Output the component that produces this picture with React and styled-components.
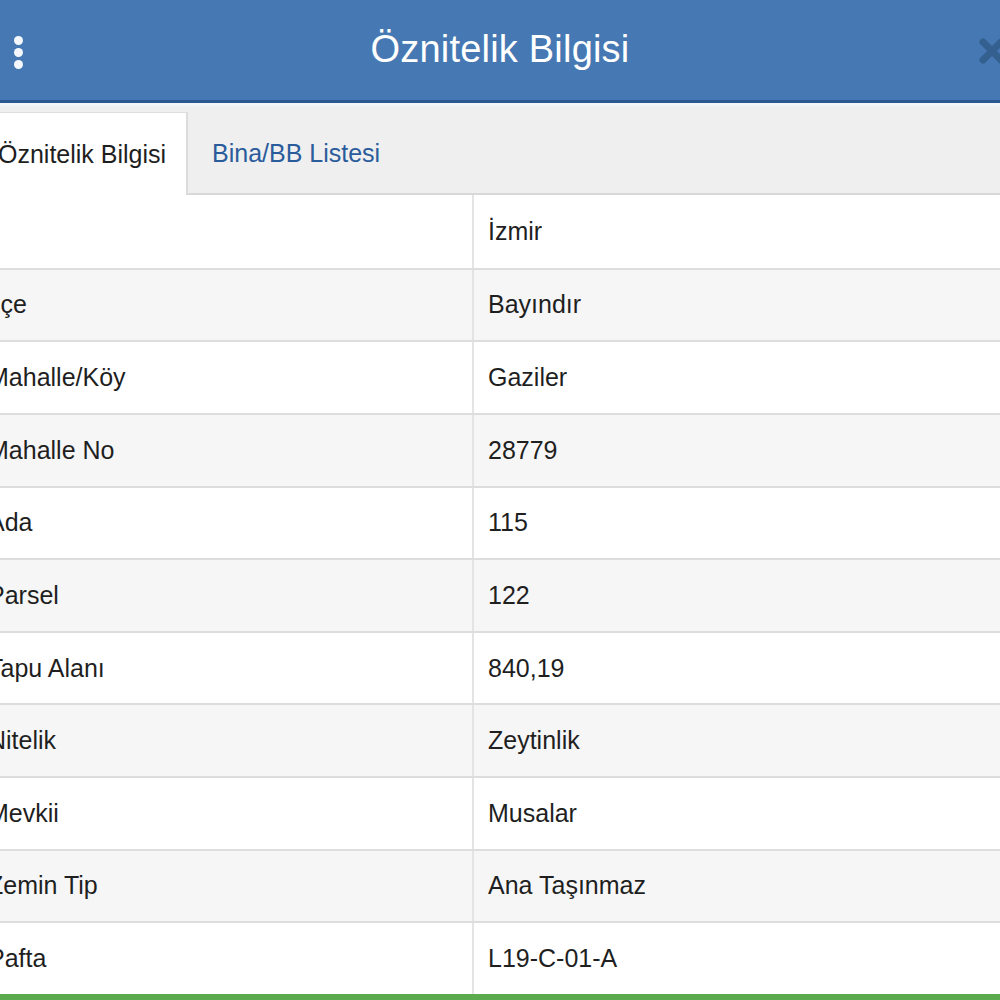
import styled, { createGlobalStyle } from "styled-components";

const GlobalStyle = createGlobalStyle`
  html, body {
    margin: 0;
    padding: 0;
    background: #ffffff;
    overflow: hidden;
  }
  body {
    font-family: "Liberation Sans", Arial, sans-serif;
  }
`;

const rows = [
  { label: "İl", value: "İzmir" },
  { label: "İlçe", value: "Bayındır" },
  { label: "Mahalle/Köy", value: "Gaziler" },
  { label: "Mahalle No", value: "28779" },
  { label: "Ada", value: "115" },
  { label: "Parsel", value: "122" },
  { label: "Tapu Alanı", value: "840,19" },
  { label: "Nitelik", value: "Zeytinlik" },
  { label: "Mevkii", value: "Musalar" },
  { label: "Zemin Tip", value: "Ana Taşınmaz" },
  { label: "Pafta", value: "L19-C-01-A" },
];

const App = () => {
  return (
    <Panel>
      <GlobalStyle />
      <Header>
        <MenuButton aria-label="menu">
          <Dot />
          <Dot />
          <Dot />
        </MenuButton>
        <Title>Öznitelik Bilgisi</Title>
        <CloseButton aria-label="close">
          <svg width="30" height="30" viewBox="0 0 30 30">
            <path
              d="M6 6 L24 24 M24 6 L6 24"
              stroke="#33608f"
              strokeWidth="7"
              strokeLinecap="round"
            />
          </svg>
        </CloseButton>
      </Header>
      <TabBar>
        <Tab active>Öznitelik Bilgisi</Tab>
        <Tab>Bina/BB Listesi</Tab>
      </TabBar>
      <Table>
        {rows.map((row, i) => (
          <Row key={row.label} striped={i % 2 === 1} first={i === 0}>
            <Cell>{row.label}</Cell>
            <Cell divider>{row.value}</Cell>
          </Row>
        ))}
      </Table>
      <Footer />
    </Panel>
  );
};

const Panel = styled.div`
  width: 1056px;
  margin-left: -28px;
  display: flex;
  flex-direction: column;
`;

const Header = styled.header`
  height: 100px;
  background: #4679b3;
  border-bottom: 3px solid #2b5892;
  display: grid;
  grid-template-columns: 1fr auto 1fr;
  align-items: center;
  padding: 0 0 0 42px;
`;

const MenuButton = styled.div`
  justify-self: start;
  display: flex;
  flex-direction: column;
  gap: 3px;
  padding-top: 4px;
`;

const Dot = styled.span`
  width: 9px;
  height: 9px;
  border-radius: 50%;
  background: #f4f8fc;
`;

const Title = styled.h1`
  margin: 0;
  color: #ffffff;
  font-size: 38px;
  font-weight: normal;
  letter-spacing: 0.2px;
  padding-bottom: 2px;
  margin-left: -42px;
`;

const CloseButton = styled.div`
  justify-self: end;
  display: flex;
  padding-right: 21px;
  padding-top: 2px;
`;

const TabBar = styled.nav`
  height: 81px;
  border-top: 3px solid #f3f6f9;
  padding-top: 6px;
  background: #efefef;
  border-bottom: 2px solid #d8d8d8;
  display: flex;
  align-items: stretch;
`;

const Tab = styled.div`
  display: flex;
  align-items: center;
  font-size: 25px;
  box-sizing: border-box;
  margin-bottom: -2px;
  ${(p) =>
    p.active
      ? `
    width: 216px;
    padding-left: 26px;
    background: #ffffff;
    color: #1e1e1e;
    border-top: 1px solid #dedede;
    border-right: 2px solid #dcdcdc;
  `
      : `
    padding-left: 24px;
    color: #2a5c9c;
  `}
`;

const Table = styled.div`
  display: flex;
  flex-direction: column;
`;

const Row = styled.div`
  display: grid;
  grid-template-columns: 500px 1fr;
  height: 72.64px;
  box-sizing: border-box;
  background: ${(p) => (p.striped ? "#f6f6f6" : "#ffffff")};
  border-top: ${(p) => (p.first ? "0" : "2px solid #dddddd")};
`;

const Cell = styled.div`
  display: flex;
  align-items: center;
  padding-left: ${(p) => (p.divider ? "14px" : "16px")};
  font-size: 25px;
  color: #1f1f1f;
  border-left: ${(p) => (p.divider ? "2px solid #e4e4e4" : "0")};
`;

const Footer = styled.div`
  height: 8px;
  background: #5bab4e;
`;

export default App;
